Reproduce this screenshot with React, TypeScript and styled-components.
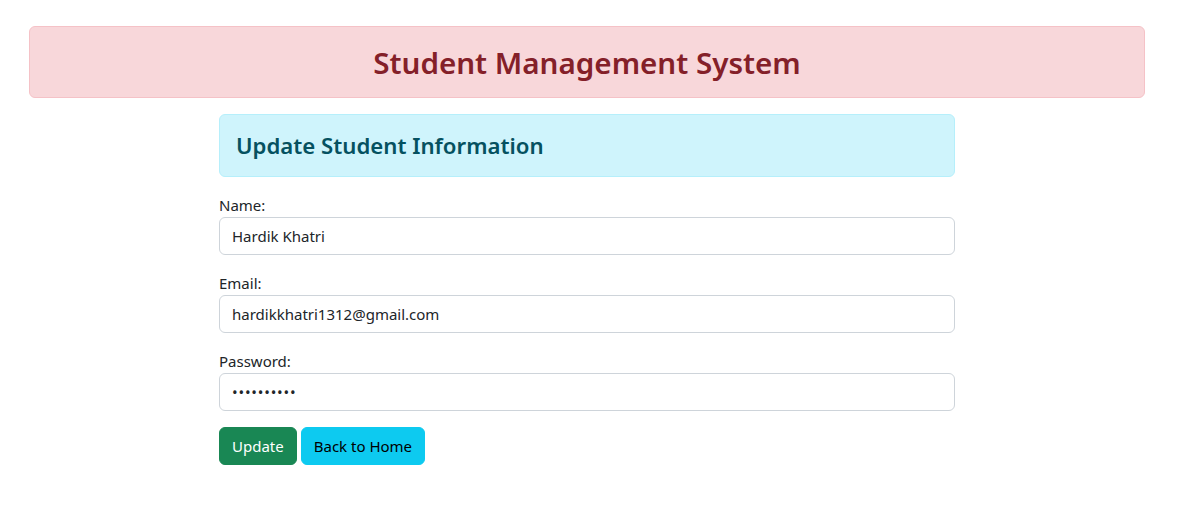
import React from "react";
import styled, { createGlobalStyle } from "styled-components";

const Global = createGlobalStyle`
  * { box-sizing: border-box; }
  body {
    margin: 0;
    background: #fff;
    font-family: "Noto Sans", "Open Sans", sans-serif;
    font-size: 16px;
    line-height: 1.5;
    color: #212529;
  }
`;

const Page = styled.div`
  width: 1116px;
  margin: 26px 0 0 29px;
`;

const Alert = styled.div<{ $tone: "danger" | "info" }>`
  border-radius: 6px;
  padding: 17px 16px 15px;
  margin-bottom: 16px;
  border: 1px solid ${(p) => (p.$tone === "danger" ? "#f5c2c7" : "#b6effb")};
  background: ${(p) => (p.$tone === "danger" ? "#f8d7da" : "#cff4fc")};
  color: ${(p) => (p.$tone === "danger" ? "#842029" : "#055160")};
`;

const Title = styled.h2`
  margin: 0;
  text-align: center;
  font-size: 29.6px;
  font-weight: 600;
  line-height: 38px;
`;

const Subtitle = styled.h4`
  margin: 0;
  font-size: 22.2px;
  font-weight: 600;
  line-height: 28.8px;
`;

const Column = styled.div`
  width: 736px;
  margin: 0 auto;
`;

const Field = styled.div`
  margin-bottom: 16px;
`;

const Label = styled.label`
  display: block;
  font-size: 15px;
  line-height: 24px;
`;

const Input = styled.input<{ $spaced?: boolean }>`
  display: block;
  width: 100%;
  height: 38px;
  padding: 6px 12px;
  font-family: inherit;
  font-size: 15px;
  line-height: 24px;
  letter-spacing: ${(p) => (p.$spaced ? "0.8px" : "normal")};
  color: #212529;
  background: #fff;
  border: 1px solid #ced4da;
  border-radius: 6px;
  outline: none;
`;

const Buttons = styled.div`
  display: flex;
  gap: 4px;
`;

const Button = styled.button<{ $variant: "success" | "info" }>`
  height: 38px;
  padding: 6px 12px;
  font-family: inherit;
  font-size: 15px;
  line-height: 24px;
  border-radius: 6px;
  border: 1px solid ${(p) => (p.$variant === "success" ? "#198754" : "#0dcaf0")};
  background: ${(p) => (p.$variant === "success" ? "#198754" : "#0dcaf0")};
  color: ${(p) => (p.$variant === "success" ? "#fff" : "#000")};
  cursor: pointer;
`;

export default function App() {
  return (
    <>
      <Global />
      <Page>
        <Alert $tone="danger">
          <Title>Student Management System</Title>
        </Alert>
        <Column>
          <Alert $tone="info">
            <Subtitle>Update Student Information</Subtitle>
          </Alert>
          <form onSubmit={(e) => e.preventDefault()}>
            <Field>
              <Label htmlFor="name">Name:</Label>
              <Input id="name" type="text" defaultValue="Hardik Khatri" />
            </Field>
            <Field>
              <Label htmlFor="email">Email:</Label>
              <Input id="email" type="email" defaultValue="hardikkhatri1312@gmail.com" />
            </Field>
            <Field>
              <Label htmlFor="password">Password:</Label>
              <Input id="password" type="password" $spaced defaultValue="1234567890" />
            </Field>
            <Buttons>
              <Button $variant="success" type="submit">Update</Button>
              <Button $variant="info" type="button">Back to Home</Button>
            </Buttons>
          </form>
        </Column>
      </Page>
    </>
  );
}
